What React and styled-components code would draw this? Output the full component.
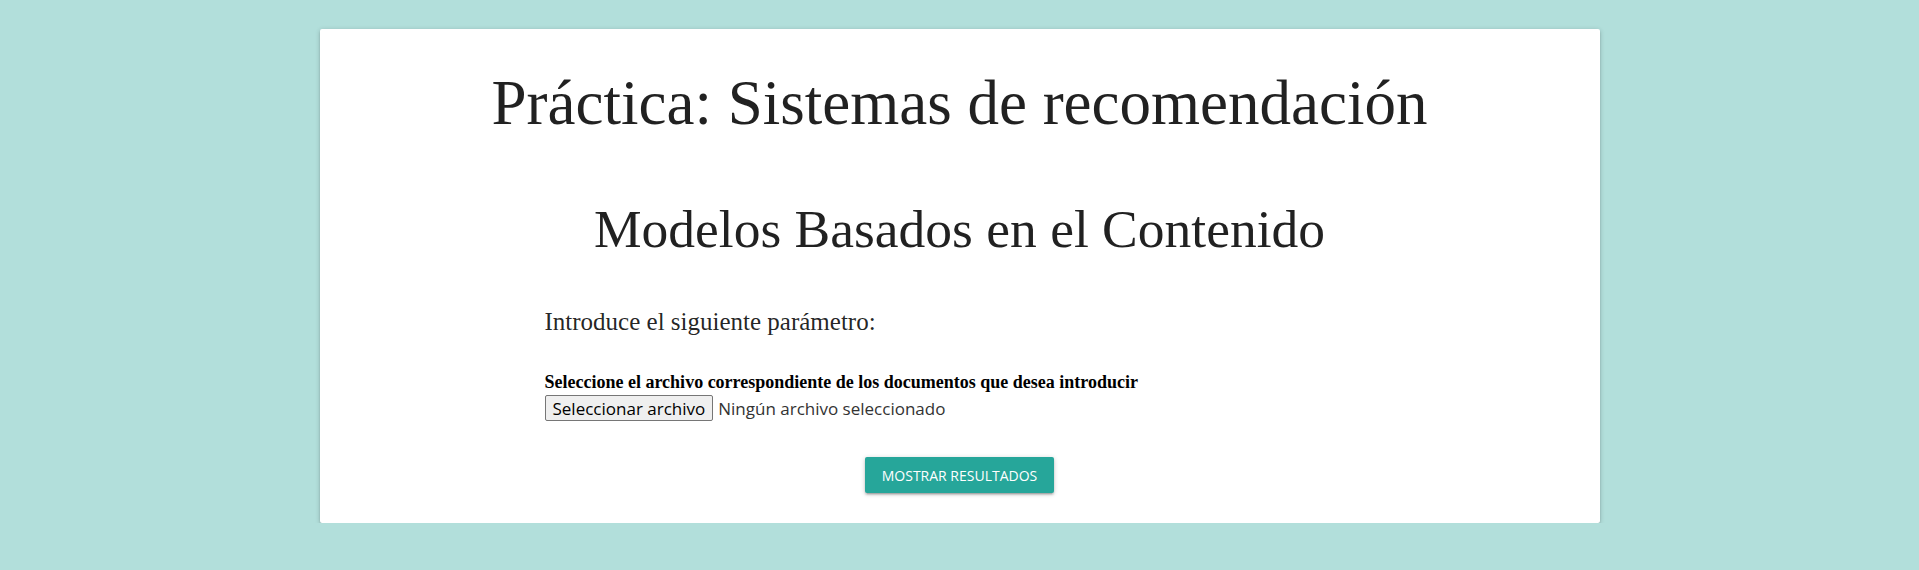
import React from 'react';
import styled, { createGlobalStyle } from 'styled-components';

const GlobalStyle = createGlobalStyle`
  html, body {
    margin: 0;
    padding: 0;
  }
  body {
    background-color: #b2dfdb;
    color: rgba(0, 0, 0, 0.87);
    font-family: "Liberation Serif", "Times New Roman", serif;
  }
`;

const Card = styled.div`
  width: 1280px;
  margin: 29px auto 0;
  background-color: #ffffff;
  border-radius: 2px;
  box-shadow: 0 2px 2px 0 rgba(0, 0, 0, 0.14), 0 3px 1px -2px rgba(0, 0, 0, 0.12), 0 1px 5px 0 rgba(0, 0, 0, 0.2);
  padding: 40px 0 30px;
  box-sizing: border-box;
`;

const Title = styled.h1`
  margin: 0;
  font-size: 63px;
  font-weight: 400;
  line-height: 1.1;
  text-align: center;
`;

const Subtitle = styled.h2`
  margin: 62px 0 0;
  font-size: 53.5px;
  font-weight: 400;
  line-height: 1.1;
  text-align: center;
`;

const Form = styled.div`
  padding-left: 225px;
  margin-top: 49px;
`;

const Prompt = styled.h5`
  margin: 0;
  font-size: 25px;
  font-weight: 400;
  line-height: 1.1;
`;

const FieldLabel = styled.label`
  display: block;
  margin-top: 36px;
  font-size: 18px;
  font-weight: 700;
  line-height: 1.2;
  color: #000;
`;

const FileRow = styled.div`
  display: flex;
  align-items: center;
  gap: 5px;
  margin-top: 2px;
  font-family: "Open Sans", "Noto Sans", sans-serif;
  font-size: 17px;
  color: #333;
`;

const FileButton = styled.button`
  height: 26px;
  padding: 0 7px;
  font-family: inherit;
  font-size: 17px;
  color: #000;
  background-color: #efefef;
  border: 1px solid #767676;
  border-radius: 2px;
`;

const Actions = styled.div`
  display: flex;
  justify-content: center;
  margin-top: 36px;
`;

const SubmitButton = styled.button`
  height: 36px;
  padding: 0 17px;
  border: none;
  border-radius: 2px;
  background-color: #26a69a;
  color: #ffffff;
  font-family: "Open Sans", "Noto Sans", sans-serif;
  font-size: 14px;
  text-transform: uppercase;
  box-shadow: 0 2px 2px 0 rgba(0, 0, 0, 0.14), 0 3px 1px -2px rgba(0, 0, 0, 0.12), 0 1px 5px 0 rgba(0, 0, 0, 0.2);
  cursor: pointer;
`;

const App = () => {
  return (
    <>
      <GlobalStyle />
      <Card>
        <Title>Práctica: Sistemas de recomendación</Title>
        <Subtitle>Modelos Basados en el Contenido</Subtitle>
        <Form>
          <Prompt>Introduce el siguiente parámetro:</Prompt>
          <FieldLabel>Seleccione el archivo correspondiente de los documentos que desea introducir</FieldLabel>
          <FileRow>
            <FileButton type='button'>Seleccionar archivo</FileButton>
            <span>Ningún archivo seleccionado</span>
          </FileRow>
        </Form>
        <Actions>
          <SubmitButton type='button'>Mostrar resultados</SubmitButton>
        </Actions>
      </Card>
    </>
  );
};

export default App;
